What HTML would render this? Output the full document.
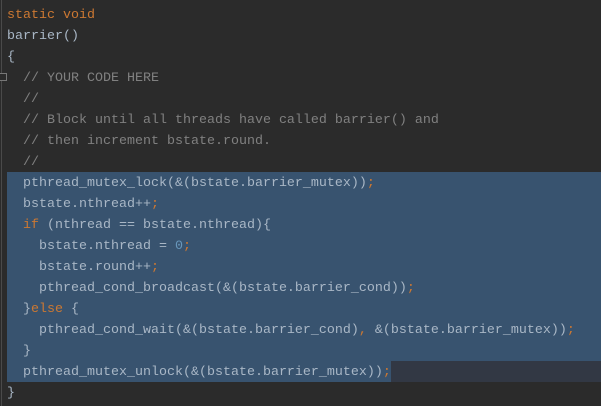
<!DOCTYPE html>
<html><head><style>
body{margin:0;width:601px;height:406px;background:#2b2b2b;overflow:hidden;position:relative;font-family:"Liberation Mono",monospace;font-size:13.33px;color:#a9b7c6}
.g{position:absolute;left:1px;top:0;width:1px;height:406px;background:#4a4a4a}
.l{position:absolute;left:7px;height:21px;line-height:23px;white-space:pre}
.sel{position:absolute;left:7px;right:0;top:172px;height:189px;background:#38536f}
.sel2{position:absolute;left:7px;width:384px;top:361px;height:21px;background:#38536f}
.cur{position:absolute;left:391px;right:0;top:361px;height:21px;background:#323844}
.k{color:#cc7832}.c{color:#808080}.n{color:#6897bb}
</style></head><body>
<div class="g"></div>
<div class="sel"></div><div class="sel2"></div><div class="cur"></div>
<div style="position:absolute;left:0;top:73px;width:7px;height:8px;border:1px solid #777;border-left:none;box-sizing:border-box;background:#2b2b2b"></div>
<div class="l" style="top:4px"><span class="k">static void</span></div>
<div class="l" style="top:25px">barrier()</div>
<div class="l" style="top:46px">{</div>
<div class="l c" style="top:67px">  // YOUR CODE HERE</div>
<div class="l c" style="top:88px">  //</div>
<div class="l c" style="top:109px">  // Block until all threads have called barrier() and</div>
<div class="l c" style="top:130px">  // then increment bstate.round.</div>
<div class="l c" style="top:151px">  //</div>
<div class="l" style="top:172px">  pthread_mutex_lock(&amp;(bstate.barrier_mutex))<span class="k">;</span></div>
<div class="l" style="top:193px">  bstate.nthread++<span class="k">;</span></div>
<div class="l" style="top:214px">  <span class="k">if</span> (nthread == bstate.nthread){</div>
<div class="l" style="top:235px">    bstate.nthread = <span class="n">0</span><span class="k">;</span></div>
<div class="l" style="top:256px">    bstate.round++<span class="k">;</span></div>
<div class="l" style="top:277px">    pthread_cond_broadcast(&amp;(bstate.barrier_cond))<span class="k">;</span></div>
<div class="l" style="top:298px">  }<span class="k">else</span> {</div>
<div class="l" style="top:319px">    pthread_cond_wait(&amp;(bstate.barrier_cond)<span class="k">,</span> &amp;(bstate.barrier_mutex))<span class="k">;</span></div>
<div class="l" style="top:340px">  }</div>
<div class="l" style="top:361px">  pthread_mutex_unlock(&amp;(bstate.barrier_mutex))<span class="k">;</span></div>
<div class="l" style="top:382px">}</div>
</body></html>
